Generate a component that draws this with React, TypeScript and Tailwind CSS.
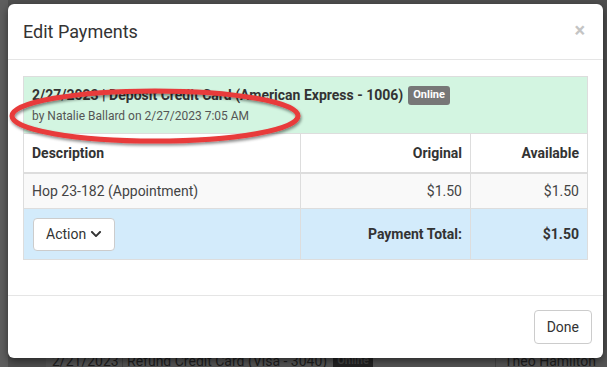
import { FaChevronDown } from "react-icons/fa";

const App = () => {
  return (
    <div
      className="relative h-[367px] w-[607px] overflow-hidden bg-[#4f4f4f] text-[#333]"
      style={{ fontFamily: "Roboto, 'Liberation Sans', sans-serif" }}
    >
      {/* page behind the overlay */}
      <div className="absolute left-0 top-0 h-full w-[8px] bg-[#5e5e5e]" />
      <div className="absolute left-[46px] top-[350px] flex h-[22px] w-[570px] items-center bg-[#555] text-[14px] text-[#1e1e1e]">
        <span className="w-[76px] pl-[6px]">2/21/2023</span>
        <span className="border-l border-[#444] pl-[4px]">Refund Credit Card (Visa - 3040)</span>
        <span className="ml-[6px] bg-[#222] px-[4px] text-[11px] font-bold text-[#444]">Online</span>
        <span className="ml-auto border-l border-[#444] pl-[8px] pr-[20px]">Theo Hamilton</span>
      </div>

      {/* modal */}
      <div className="absolute left-[8px] top-[4px] flex h-[354px] w-[595px] flex-col rounded-[6px] bg-white shadow-[0_3px_9px_rgba(0,0,0,0.5)]">
        <div className="flex h-[56px] items-center justify-between border-b border-[#e5e5e5] px-[15px]">
          <h4 className="text-[18px] text-[#333]">Edit Payments</h4>
          <span className="mr-[3px] mt-[-4px] text-[20px] font-bold leading-none text-[#c4c4c4]">×</span>
        </div>

        <div className="h-[235px] px-[15px] pt-[16px]">
          <div className="border border-[#ddd]">
            <div className="flex h-[57px] flex-col justify-center gap-[1px] border-b border-[#ddd] bg-[#d3f5e1] px-[8px]">
              <div className="flex items-center gap-[5px] text-[14px] font-bold text-[#333]">
                <span>2/27/2023 | Deposit Credit Card (American Express - 1006)</span>
                <span className="rounded-[3px] bg-[#777] px-[5px] py-[1px] text-[11px] font-bold text-white">Online</span>
              </div>
              <div className="text-[12px] text-[#555]">by Natalie Ballard on 2/27/2023 7:05 AM</div>
            </div>
            <div className="grid grid-cols-[277px_170px_1fr] text-[14px]">
              <div className="flex h-[40px] items-center border-b-2 border-r border-[#ddd] px-[8px] font-bold">Description</div>
              <div className="flex h-[40px] items-center justify-end border-b-2 border-r border-[#ddd] px-[8px] font-bold">Original</div>
              <div className="flex h-[40px] items-center justify-end border-b-2 border-[#ddd] px-[8px] font-bold">Available</div>

              <div className="flex h-[35px] items-center border-b border-r border-[#ddd] bg-[#f9f9f9] px-[8px] text-[#444]">Hop 23-182 (Appointment)</div>
              <div className="flex h-[35px] items-center justify-end border-b border-r border-[#ddd] bg-[#f9f9f9] px-[8px] text-[#444]">$1.50</div>
              <div className="flex h-[35px] items-center justify-end border-b border-[#ddd] bg-[#f9f9f9] px-[8px] text-[#444]">$1.50</div>

              <div className="flex h-[50px] items-center border-r border-[#ddd] bg-[#d3ebfb] px-[9px]">
                <button className="flex h-[33px] items-center gap-[4px] rounded-[4px] border border-[#ccc] bg-white px-[12px] text-[14px] text-[#333]">
                  Action <FaChevronDown className="text-[12px]" />
                </button>
              </div>
              <div className="flex h-[50px] items-center justify-end border-r border-[#ddd] bg-[#d3ebfb] px-[8px] font-bold">Payment Total:</div>
              <div className="flex h-[50px] items-center justify-end bg-[#d3ebfb] px-[8px] font-bold">$1.50</div>
            </div>
          </div>
        </div>

        <div className="flex flex-1 items-center justify-end border-t border-[#e5e5e5] px-[11px]">
          <button className="h-[34px] rounded-[4px] border border-[#ccc] bg-white px-[12px] text-[14px] text-[#333]">Done</button>
        </div>
      </div>

      {/* red highlight ellipse */}
      <svg className="absolute left-0 top-0" width="607" height="367" viewBox="0 0 607 367">
        <defs>
          <filter id="sh" x="-10%" y="-30%" width="120%" height="160%">
            <feDropShadow dx="1" dy="2" stdDeviation="1.5" floodColor="#000" floodOpacity="0.45" />
          </filter>
        </defs>
        <ellipse cx="155" cy="116" rx="143" ry="25" fill="none" stroke="#e83a3a" strokeWidth="5" filter="url(#sh)" />
      </svg>
    </div>
  );
};

export default App;
